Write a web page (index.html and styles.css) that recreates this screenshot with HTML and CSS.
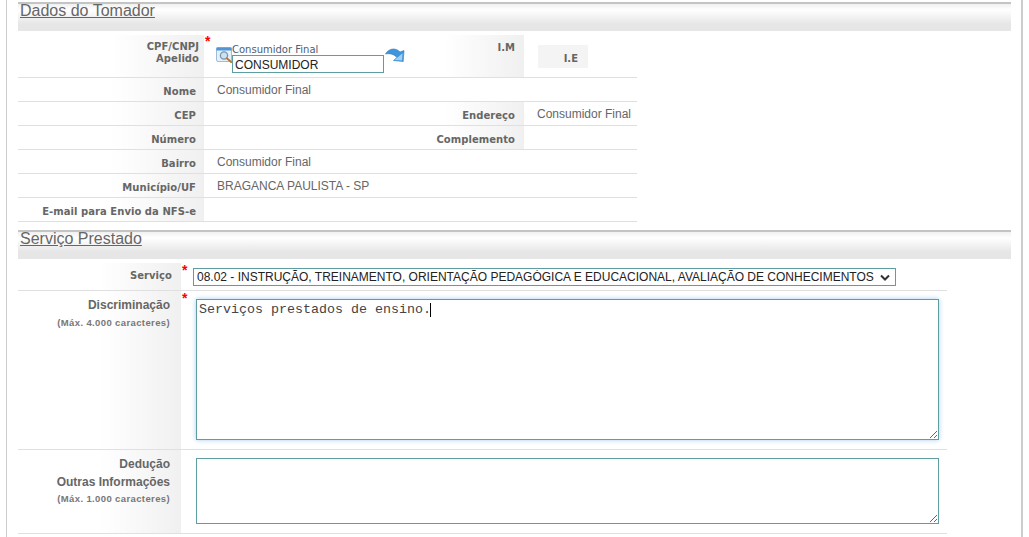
FILE: index.html
```html
<!DOCTYPE html>
<html lang="pt-BR">
<head>
<meta charset="utf-8">
<title>Dados do Tomador</title>
<link rel="stylesheet" href="styles.css">
</head>
<body>
<div class="page">
  <h2 class="section-head"><span class="section-title">Dados do Tomador</span></h2>
  <table class="grid tomador">
    <colgroup><col class="c1"><col class="c2"><col class="c3"><col class="c4"></colgroup>
    <tr class="row-first">
      <th class="label top"><span class="two">CPF/CNPJ<br>Apelido</span></th>
      <td class="field-cell">
        <span class="req req-a">*</span>
        <div class="lookup">
          <svg class="icon-search" width="17" height="16" viewBox="0 0 17 16" aria-hidden="true">
            <rect x="0.5" y="0.5" width="15" height="14" rx="1.5" fill="#e4f0fa" stroke="#9dbddb"/>
            <rect x="0.5" y="0.5" width="15" height="3" fill="#4f95d8"/>
            <circle cx="8" cy="8.500" r="3.600" fill="#c9e2f5" stroke="#7b93a8" stroke-width="1.300"/>
            <path d="M10.800 11.300l4.400 3.700" stroke="#b5793c" stroke-width="2" stroke-linecap="round"/>
          </svg>
          <div class="lookup-main">
            <span class="lookup-caption">Consumidor Final</span>
            <input class="text-input" type="text" value="CONSUMIDOR">
          </div>
          <svg class="icon-arrow" width="20" height="16" viewBox="0 0 20 16" aria-hidden="true">
            <path d="M.5 7C4 1 11 .5 15 5l4-1.500-.8 11L8.500 13.500l3.500-3C9.500 7.500 5 6 .5 7z" fill="#3f95dc" stroke="#2f78b8" stroke-width=".6"/>
            <path d="M12.500 10.500l5-4.200-.4 7.200-7.600-.5z" fill="#a5cdef"/>
          </svg>
        </div>
      </td>
      <th class="label top label-mid"><span class="im">I.M</span></th>
      <td class="ie-cell"><div class="ie-box">I.E</div></td>
    </tr>
    <tr><th class="label">Nome</th><td class="value" colspan="3">Consumidor Final</td></tr>
    <tr><th class="label">CEP</th><td></td><th class="label label-mid">Endereço</th><td class="value">Consumidor Final</td></tr>
    <tr><th class="label">Número</th><td></td><th class="label label-mid">Complemento</th><td></td></tr>
    <tr><th class="label">Bairro</th><td class="value" colspan="3">Consumidor Final</td></tr>
    <tr><th class="label">Município/UF</th><td class="value" colspan="3">BRAGANCA PAULISTA - SP</td></tr>
    <tr><th class="label">E-mail para Envio da NFS-e</th><td colspan="3"></td></tr>
  </table>

  <h2 class="section-head section-two"><span class="section-title">Serviço Prestado</span></h2>
  <table class="grid servico">
    <colgroup><col class="s1"><col class="s2"></colgroup>
    <tr class="row-service">
      <th class="label service-label">Serviço</th>
      <td class="control-cell">
        <span class="req req-b">*</span>
        <select class="select">
          <option>08.02 - INSTRUÇÃO, TREINAMENTO, ORIENTAÇÃO PEDAGÓGICA E EDUCACIONAL, AVALIAÇÃO DE CONHECIMENTOS</option>
        </select>
      </td>
    </tr>
    <tr class="row-disc">
      <th class="label big top"><div class="big-line">Discriminação</div><div class="small-line">(Máx. 4.000 caracteres)</div></th>
      <td class="control-cell">
        <span class="req req-c">*</span>
        <div class="area-wrap">
          <textarea class="area area-focus">Serviços prestados de ensino.</textarea>
          <span class="caret"></span>
        </div>
      </td>
    </tr>
    <tr class="row-ded">
      <th class="label big top"><div class="big-line">Dedução</div><div class="big-line">Outras Informações</div><div class="small-line tight">(Máx. 1.000 caracteres)</div></th>
      <td class="control-cell"><textarea class="area area-plain"></textarea></td>
    </tr>
  </table>
</div>
</body>
</html>
```
FILE: styles.css
```css
* { box-sizing: border-box; }
html, body { margin: 0; padding: 0; background: #fff; height: 100%; overflow: hidden; }
body { font-family: "Liberation Sans", Arial, sans-serif; color: #666; }
.page {
  margin-left: 6px;
  width: 1017px;
  height: 537px;
  border-left: 1px solid #ccc;
  border-right: 2px solid #ccc;
  padding: 2px 10px 0 11px;
}
.section-head {
  margin: 0;
  height: 29px;
  border-top: 2px solid #c4c4c4;
  background: linear-gradient(to bottom, #f0f0f0 0, #fff 6px, #f4f4f4 12px, #e6e6e6 20px, #e6e6e6 100%);
  font-weight: normal;
  font-size: 16px;
  line-height: 14px;
  padding-left: 2px;
}
.section-title { color: #666; text-decoration: underline; }
.section-two { margin-top: 8px; }
.grid { border-collapse: collapse; table-layout: fixed; }
.grid tr { border-bottom: 1px solid #e0e0e0; }
.tomador { width: 619px; margin-top: 4px; }
.c1 { width: 186px; }
.c2 { width: 226px; }
.c3 { width: 94px; }
.c4 { width: 113px; }
.tomador tr { height: 24px; }
.tomador tr.row-first { height: 42px; }
.label {
  padding: 5px 8px 0 0;
  text-align: right;
  vertical-align: middle;
  font-family: "DejaVu Sans", Verdana, sans-serif;
  font-weight: bold;
  font-size: 10px;
  letter-spacing: .05px;
  color: #666;
  background: linear-gradient(to right, #fff 50%, #f0f0f0 100%);
  white-space: nowrap;
}
.label.top { vertical-align: top; }
.label-mid { padding-right: 9px; background: linear-gradient(to right, #fff 15%, #f0f0f0 100%); }
.two { display: block; margin-right: -3px; line-height: 12px; padding-top: 1px; }
.im { display: block; padding-top: 2px; }
.value { font-size: 12px; color: #666; padding: 2px 0 0 13px; vertical-align: middle; white-space: nowrap; }
.field-cell { position: relative; padding: 0; vertical-align: top; }
.req { position: absolute; color: #f00; font-size: 14px; font-weight: bold; line-height: 14px; font-family: "Liberation Sans", sans-serif; }
.req-a { left: 1px; top: -1px; }
.req-b { left: 1px; top: 0; }
.req-c { left: 1px; top: 0; }
.lookup { display: flex; align-items: flex-start; padding: 10px 0 0 12px; }
.icon-search { margin-top: 2px; margin-right: -1px; flex: none; }
.lookup-main { display: flex; flex-direction: column; }
.lookup-caption { font-family: "DejaVu Sans", Verdana, sans-serif; font-size: 10px; line-height: 10px; color: #4a6076; }
.text-input {
  width: 152px;
  height: 18px;
  margin: 0;
  padding: 2px 0 0 2px;
  border: 1px solid #5f9ea0;
  border-radius: 0;
  outline: 0;
  font-family: "Liberation Sans", sans-serif;
  font-size: 12px;
  color: #222;
  background: #fff;
}
.icon-arrow { margin: 2px 0 0 1px; flex: none; }
.ie-cell { padding: 0 0 0 14px; vertical-align: top; }
.ie-box {
  width: 50px;
  height: 23px;
  margin-top: 10px;
  background: #f4f4f4;
  font-family: "DejaVu Sans", Verdana, sans-serif;
  font-weight: bold;
  font-size: 10px;
  text-align: right;
  padding: 8px 10px 0 0;
  line-height: 12px;
}
.servico { width: 929px; margin-top: 4px; }
.s1 { width: 163px; }
.s2 { width: 766px; }
.row-service { height: 28px; }
.row-disc { height: 159px; }
.row-ded { height: 84px; }
.service-label { padding: 0 9px 2px 0; }
.control-cell { position: relative; padding: 0; vertical-align: top; }
.select {
  display: block;
  appearance: none;
  margin: 5px 0 0 12px;
  width: 703px;
  height: 18px;
  padding: 0 0 0 3px;
  border: 1px solid #5f9ea0;
  border-radius: 0;
  outline: 0;
  background: #fff url("data:image/svg+xml,%3Csvg xmlns='http://www.w3.org/2000/svg' width='10' height='7'%3E%3Cpath d='M1 1.500l4 4 4-4' fill='none' stroke='%23333' stroke-width='2'/%3E%3C/svg%3E") no-repeat 686px 5px;
  font-family: "Liberation Sans", sans-serif;
  font-size: 12px;
  color: #222;
}
.big { font-family: "Liberation Sans", sans-serif; padding: 0 11px 0 0; letter-spacing: 0; }
.big-line { font-size: 12px; line-height: 18px; color: #666; }
.row-disc .big { padding-top: 5px; }
.row-ded .big { padding-top: 5px; }
.small-line { font-size: 9.500px; letter-spacing: .38px; line-height: 12px; margin-top: 3px; color: #777; }
.small-line.tight { margin-top: 2px; }
.area-wrap { position: relative; margin: 8px 0 0 15px; width: 743px; height: 141px; }
.area {
  display: block;
  width: 743px;
  margin: 0;
  padding: 3px 2px 2px;
  border: 1px solid #5f9ea0;
  border-radius: 0;
  outline: 0;
  background: #fff;
  font-family: "Liberation Mono", monospace;
  font-size: 13.333px;
  line-height: 14px;
  color: #444;
}
.area-focus { height: 141px; box-shadow: 0 0 5px #a9cdf0; }
.area-plain { height: 66px; margin: 8px 0 0 15px; }
.caret { position: absolute; left: 234px; top: 4px; width: 1px; height: 14px; background: #000; }
```
